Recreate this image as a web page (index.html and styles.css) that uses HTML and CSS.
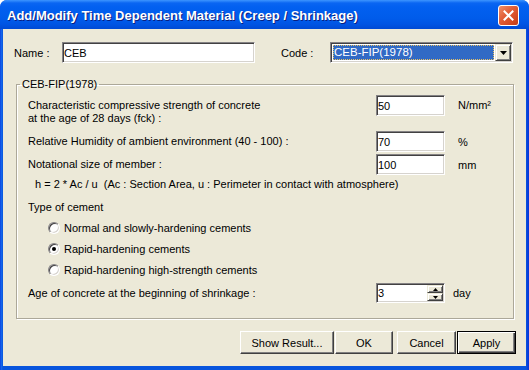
FILE: index.html
```html
<!DOCTYPE html>
<html lang="en">
<head>
    <meta charset="UTF-8">
    <title>Add/Modify Time Dependent Material</title>
    <link rel="stylesheet" href="styles.css">
</head>
<body>

    <div class="window">
        <div class="titlebar">
            <span class="titlebar__text">Add/Modify Time Dependent Material (Creep / Shrinkage)</span>
            <button class="titlebar__close" type="button">
                <svg width="11" height="11" viewBox="0 0 11 11"><path d="M1.5 1.5 L9.5 9.5 M9.5 1.5 L1.5 9.5" stroke="#fff" stroke-width="2" stroke-linecap="square"/></svg>
            </button>
        </div>

        <div class="client">
            <div class="top-row">
                <label class="top-row__label" for="name">Name :</label>
                <input class="textbox textbox--name" id="name" type="text" value="CEB">
                <label class="top-row__label top-row__label--code">Code :</label>
                <div class="combo">
                    <span class="combo__value">CEB-FIP(1978)</span>
                    <span class="combo__button">
                        <svg width="7" height="4" viewBox="0 0 7 4"><path d="M0 0 H7 L3.5 4 Z" fill="#000"/></svg>
                    </span>
                </div>
            </div>

            <fieldset class="group">
                <legend class="group__title">CEB-FIP(1978)</legend>

                <div class="param param--tall">
                    <span class="param__label">Characteristic compressive strength of concrete<br>at the age of 28 days (fck) :</span>
                    <input class="textbox param__input" type="text" value="50">
                    <span class="param__unit">N/mm²</span>
                </div>

                <div class="param param--humidity">
                    <span class="param__label">Relative Humidity of ambient environment (40 - 100) :</span>
                    <input class="textbox param__input" type="text" value="70">
                    <span class="param__unit">%</span>
                </div>

                <div class="param param--size">
                    <span class="param__label">Notational size of member :</span>
                    <input class="textbox param__input" type="text" value="100">
                    <span class="param__unit">mm</span>
                </div>

                <div class="formula">h = 2 * Ac / u&nbsp; (Ac : Section Area, u : Perimeter in contact with atmosphere)</div>

                <div class="cement-title">Type of cement</div>
                <div class="radio-list">
                    <div class="radio"><span class="radio__mark"></span>Normal and slowly-hardening cements</div>
                    <div class="radio"><span class="radio__mark radio__mark--checked"></span>Rapid-hardening cements</div>
                    <div class="radio"><span class="radio__mark"></span>Rapid-hardening high-strength cements</div>
                </div>

                <div class="param param--age">
                    <span class="param__label">Age of concrete at the beginning of shrinkage :</span>
                    <div class="spin">
                        <input class="spin__input" type="text" value="3">
                        <div class="spin__buttons">
                            <span class="spin__btn"><svg width="5" height="3" viewBox="0 0 5 3"><path d="M2.5 0 L5 3 H0 Z" fill="#000"/></svg></span>
                            <span class="spin__btn"><svg width="5" height="3" viewBox="0 0 5 3"><path d="M0 0 H5 L2.5 3 Z" fill="#000"/></svg></span>
                        </div>
                    </div>
                    <span class="param__unit param__unit--day">day</span>
                </div>
            </fieldset>

            <div class="actions">
                <button class="btn btn--wide" type="button">Show Result...</button>
                <button class="btn btn--ok" type="button">OK</button>
                <button class="btn btn--cancel" type="button">Cancel</button>
                <button class="btn btn--default" type="button">Apply</button>
            </div>
        </div>
    </div>

</body>
</html>
```

FILE: styles.css
```css
* {
    margin: 0;
    padding: 0;
    box-sizing: border-box;
}

body {
    background: #fff;
    font-family: "Liberation Sans", Arial, sans-serif;
    font-size: 11px;
    color: #000;
}

.window {
    width: 529px;
    height: 370px;
    display: flex;
    flex-direction: column;
    background: linear-gradient(to right, #0831d9 0, #166aee 1px, #0855dd 3px, #0855dd 526px, #0831d9 529px);
    border-radius: 7px 7px 0 0;
    overflow: hidden;
}

/* title bar */
.titlebar {
    height: 29px;
    flex: none;
    display: flex;
    align-items: center;
    justify-content: space-between;
    padding: 0 10px 0 7px;
    background: linear-gradient(to bottom, #3d95ff 0, #0a66f2 3px, #0260f0 7px, #005ceb 18px, #0055e4 24px, #004ad4 29px);
}

.titlebar__text {
    font-weight: bold;
    font-size: 13px;
    color: #fff;
    text-shadow: 1px 1px #0a1e80;
    padding-top: 1px;
}

.titlebar__close {
    width: 21px;
    height: 21px;
    margin-top: 2px;
    display: flex;
    align-items: center;
    justify-content: center;
    border: 1px solid #fff;
    border-radius: 3px;
    background: linear-gradient(135deg, #f0906a 0, #e2603a 40%, #d54a22 75%, #c23c18 100%);
}

/* client area */
.client {
    flex: 1;
    margin: 0 3px 4px;
    background: #ece9d8;
    padding: 13px 10px 0 11px;
}

.top-row {
    display: flex;
    align-items: center;
    height: 21px;
}

.top-row__label {
    width: 48px;
    flex: none;
}

.top-row__label--code {
    margin-left: 26px;
    width: 49px;
}

.textbox {
    height: 21px;
    border: 1px solid;
    border-color: #848284 #fff #fff #848284;
    box-shadow: inset 1px 1px #424142, inset -1px -1px #d6d3ce;
    background: #fff;
    padding: 0 2px 0 1px;
    font: inherit;
    color: #000;
    outline: none;
}

.textbox--name {
    width: 193px;
}

.combo {
    width: 183px;
    height: 21px;
    display: flex;
    padding: 1px;
    border: 1px solid;
    border-color: #848284 #fff #fff #848284;
    box-shadow: inset 1px 1px #424142, inset -1px -1px #d6d3ce;
    background: #fff;
}

.combo__value {
    flex: 1;
    margin: 1px;
    background: #316ac5;
    color: #fff;
    border: 1px dotted #e8c060;
    line-height: 13px;
    font-size: 11.5px;
}

.combo__button {
    width: 16px;
    display: flex;
    align-items: center;
    justify-content: center;
    background: #ece9d8;
    border: 1px solid;
    border-color: #ece9d8 #404040 #404040 #ece9d8;
    box-shadow: inset 1px 1px #fff, inset -1px -1px #808080;
}

/* group */
.group {
    margin: 15px 2px 0 2px;
    border: 1px solid #aca899;
    box-shadow: inset 1px 1px #fff, 1px 1px #fff;
    padding: 4px 0 15px 11px;
}

.group__title {
    margin-left: -8px;
    padding: 0 2px;
    line-height: 13px;
}

.param {
    display: flex;
    align-items: center;
    height: 21px;
}

.param__label {
    width: 348px;
    flex: none;
    line-height: 13px;
}

.param__input {
    width: 69px;
}

.param__unit {
    margin-left: 13px;
}

.param--tall {
    align-items: flex-start;
    height: 30px;
}

.param--tall .param__label {
    padding-top: 4px;
}

.param--tall .param__unit {
    line-height: 21px;
}

.param--humidity {
    margin-top: 6px;
}

.param--size {
    margin-top: 2px;
}

.formula {
    height: 18px;
    line-height: 18px;
    padding-left: 7px;
}

.cement-title {
    padding-top: 7px;
    line-height: 14px;
}

.radio-list {
    margin-top: 3px;
    padding-left: 20px;
}

.radio {
    height: 21px;
    display: flex;
    align-items: center;
}

.radio__mark {
    width: 12px;
    height: 12px;
    margin-right: 4px;
    border-radius: 50%;
    border: 1px solid;
    border-color: #848284 #fff #fff #848284;
    box-shadow: inset 1px 1px #424142, inset -1px -1px #d6d3ce;
    background: #fff;
    display: flex;
    align-items: center;
    justify-content: center;
}

.radio__mark--checked::after {
    content: "";
    width: 4px;
    height: 4px;
    border-radius: 50%;
    background: #000;
}

.param--age {
    margin-top: 3px;
    height: 20px;
}

.spin {
    width: 69px;
    height: 20px;
    display: flex;
    padding: 1px;
    border: 1px solid;
    border-color: #848284 #fff #fff #848284;
    box-shadow: inset 1px 1px #424142, inset -1px -1px #d6d3ce;
    background: #fff;
}

.spin__input {
    flex: 1;
    min-width: 0;
    border: none;
    font: inherit;
    padding-left: 0;
    outline: none;
    background: transparent;
}

.spin__buttons {
    width: 16px;
    display: flex;
    flex-direction: column;
}

.spin__btn {
    flex: 1;
    display: flex;
    align-items: center;
    justify-content: center;
    background: #ece9d8;
    border: 1px solid;
    border-color: #ece9d8 #404040 #404040 #ece9d8;
    box-shadow: inset 1px 1px #fff, inset -1px -1px #808080;
}

.param__unit--day {
    margin-left: 8px;
}

/* dialog buttons */
.actions {
    display: flex;
    justify-content: flex-end;
    margin-top: 12px;
}

.btn {
    height: 23px;
    width: 59px;
    font: inherit;
    color: #000;
    background: #ece9d8;
    border: 1px solid;
    border-color: #fff #404040 #404040 #fff;
    box-shadow: inset -1px -1px #808080;
}

.btn--wide {
    width: 94px;
}

.btn--ok {
    width: 58px;
    margin-left: 1px;
}

.btn--cancel {
    margin-left: 4px;
}

.btn--default {
    margin-left: 1px;
    border: 1px solid #000;
    box-shadow: inset 1px 1px #fff, inset -1px -1px #404040, inset -2px -2px #808080;
}
```
